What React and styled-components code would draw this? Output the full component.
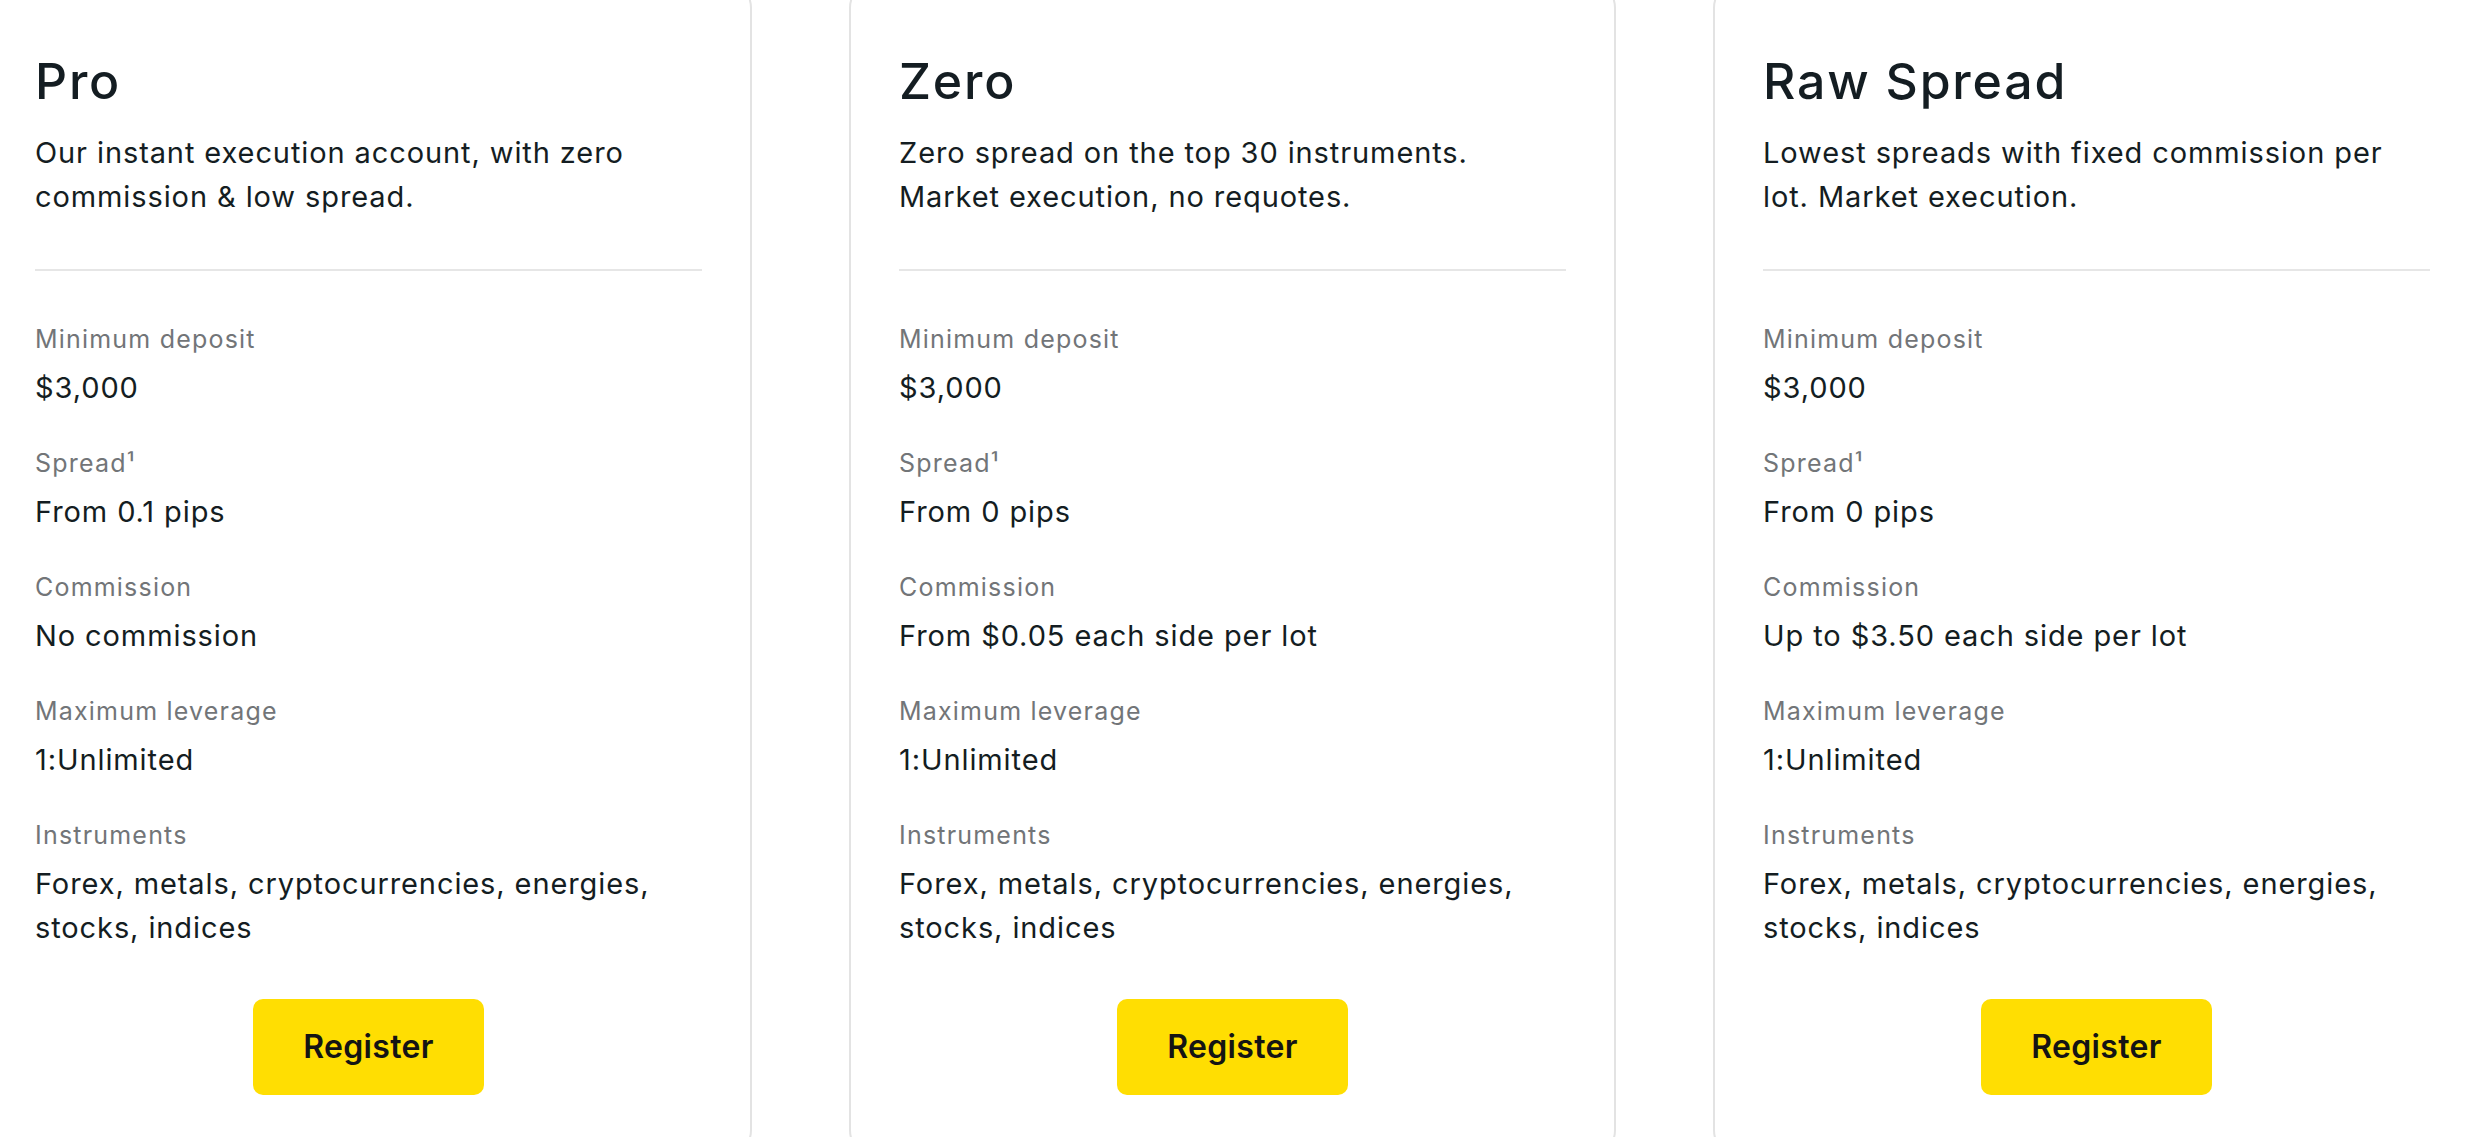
import React from "react";
import styled, { createGlobalStyle } from "styled-components";

const GlobalStyle = createGlobalStyle`
  html, body {
    margin: 0;
    padding: 0;
    background: #fff;
  }
  body {
    font-family: Inter, "Noto Sans", sans-serif;
    color: #141d22;
  }
`;

const Viewport = styled.div`
  width: 2466px;
  height: 1137px;
  overflow: hidden;
`;

const Track = styled.div`
  display: flex;
  gap: 97px;
  margin-left: -15px;
  margin-top: -20px;
`;

const Card = styled.div`
  box-sizing: border-box;
  flex: 0 0 767px;
  display: flex;
  flex-direction: column;
  padding: 69px 48px 61px;
  border: 2px solid #e3e3e3;
  border-radius: 28px;
  background: #fff;
`;

const Title = styled.h3`
  margin: 0;
  font-size: 50px;
  line-height: 60px;
  font-weight: 500;
  letter-spacing: 1.8px;
  color: #141d22;
`;

const Description = styled.p`
  margin: 20px 0 0;
  font-size: 29px;
  line-height: 44px;
  height: 88px;
  letter-spacing: 0.9px;
  color: #141d22;
`;

const Divider = styled.hr`
  margin: 49.5px 0 0;
  border: none;
  height: 2px;
  background: #e6e6e6;
`;

const Specs = styled.dl`
  margin: 50px 0 0;
  display: flex;
  flex-direction: column;
  gap: 35px;
`;

const Spec = styled.div`
  display: flex;
  flex-direction: column;
  gap: 9px;
`;

const Label = styled.dt`
  font-size: 25px;
  line-height: 36px;
  letter-spacing: 1.2px;
  color: #727578;
`;

const Value = styled.dd`
  margin: 0;
  font-size: 29px;
  line-height: 44px;
  letter-spacing: 0.9px;
  color: #141d22;
`;

const Actions = styled.div`
  display: flex;
  justify-content: center;
  margin-top: 49px;
`;

const RegisterButton = styled.button`
  width: 231px;
  height: 96px;
  border: none;
  border-radius: 10px;
  background: #ffde02;
  color: #141414;
  font-family: Inter, "Noto Sans", sans-serif;
  font-size: 32px;
  font-weight: 600;
  letter-spacing: 0.3px;
  cursor: pointer;
`;

const accounts = [
  {
    name: "Pro",
    description: "Our instant execution account, with zero commission & low spread.",
    specs: [
      ["Minimum deposit", "$3,000"],
      ["Spread¹", "From 0.1 pips"],
      ["Commission", "No commission"],
      ["Maximum leverage", "1:Unlimited"],
      ["Instruments", "Forex, metals, cryptocurrencies, energies, stocks, indices"],
    ],
  },
  {
    name: "Zero",
    description: "Zero spread on the top 30 instruments. Market execution, no requotes.",
    specs: [
      ["Minimum deposit", "$3,000"],
      ["Spread¹", "From 0 pips"],
      ["Commission", "From $0.05 each side per lot"],
      ["Maximum leverage", "1:Unlimited"],
      ["Instruments", "Forex, metals, cryptocurrencies, energies, stocks, indices"],
    ],
  },
  {
    name: "Raw Spread",
    description: "Lowest spreads with fixed commission per lot. Market execution.",
    specs: [
      ["Minimum deposit", "$3,000"],
      ["Spread¹", "From 0 pips"],
      ["Commission", "Up to $3.50 each side per lot"],
      ["Maximum leverage", "1:Unlimited"],
      ["Instruments", "Forex, metals, cryptocurrencies, energies, stocks, indices"],
    ],
  },
];

const App = () => {
  return (
    <Viewport>
      <GlobalStyle />
      <Track>
        {accounts.map((acc) => (
          <Card key={acc.name}>
            <Title>{acc.name}</Title>
            <Description>{acc.description}</Description>
            <Divider />
            <Specs>
              {acc.specs.map(([label, value]) => (
                <Spec key={label}>
                  <Label>{label}</Label>
                  <Value>{value}</Value>
                </Spec>
              ))}
            </Specs>
            <Actions>
              <RegisterButton>Register</RegisterButton>
            </Actions>
          </Card>
        ))}
      </Track>
    </Viewport>
  );
};

export default App;
